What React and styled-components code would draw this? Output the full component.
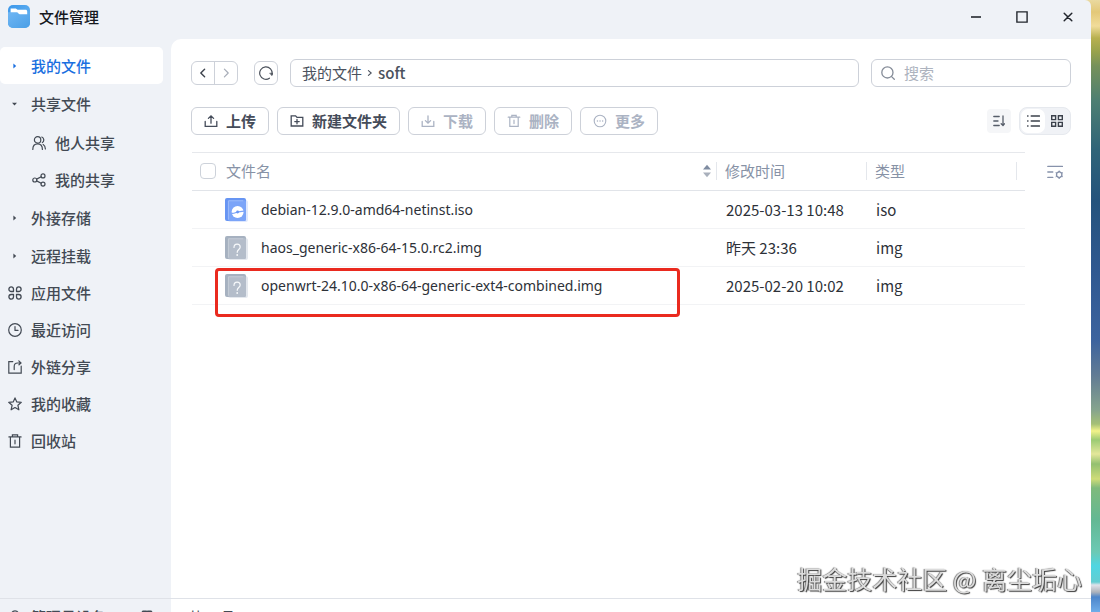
import { useState } from "react";
import styled, { createGlobalStyle, css } from "styled-components";

const GlobalStyle = createGlobalStyle`
  * {
    box-sizing: border-box;
  }
  body {
    margin: 0;
    overflow: hidden;
    font-family: "Noto Sans CJK SC", "Open Sans", sans-serif;
    font-size: 15px;
    line-height: 20px;
    color: #2b2f36;
  }
  button, input {
    font: inherit;
    color: inherit;
  }
  button {
    padding: 0;
    border: 0;
    background: none;
    cursor: pointer;
  }
  a {
    color: inherit;
    text-decoration: none;
  }
  ul {
    list-style: none;
    margin: 0;
    padding: 0;
  }
  svg {
    display: block;
    flex: none;
  }
`;

// desktop + window
const Desktop = styled.div`
  height: 100vh;
  padding-right: 9px;
  overflow: hidden;
  background: linear-gradient(
    180deg,
    #ead9a0 0,
    #e3c878 12px,
    #f1dc9a 26px,
    #b8b04f 38px,
    #98a24c 52px,
    #76915a 66px,
    #4e7f72 100px,
    #2f6478 150px,
    #24537c 200px,
    #2f5890 270px,
    #3c639e 340px,
    #627c94 376px,
    #86a48e 410px,
    #a5c076 424px,
    #f3f38a 431px,
    #9ccb74 440px,
    #e4e79a 454px,
    #93c070 464px,
    #cfdc78 479px,
    #7fba7c 488px,
    #63b894 520px,
    #6cc9b4 552px,
    #4fd6e2 566px,
    #63cdd2 582px,
    #dfe2ea 585px,
    #aeb3bb 592px,
    #4d86cb 597px,
    #6fade9 612px
  );
`;

// the window runs past the lower edge of the screen
const Window = styled.div`
  display: flex;
  flex-direction: column;
  height: calc(100vh + 22px);
  background: #eff2f7;
  border-radius: 0 6px 0 0;
  overflow: hidden;
`;

const TitleBar = styled.header`
  display: flex;
  align-items: center;
  flex: none;
  height: 39px;
  padding: 0 0 6px 8px;
  gap: 9px;
`;

const Title = styled.h1`
  flex: 1;
  margin: 0;
  font-size: 15px;
  font-weight: 500;
  color: #15181d;
`;

const WindowControls = styled.div`
  display: flex;
`;

const WindowButton = styled.button`
  display: flex;
  align-items: center;
  justify-content: center;
  width: 46px;
  height: 32px;
  color: #22262d;
`;

const Body = styled.div`
  display: flex;
  flex: 1;
  min-height: 0;
`;

// sidebar
const Sidebar = styled.aside`
  display: flex;
  flex-direction: column;
  flex: none;
  width: 171px;
`;

const SideNav = styled.nav`
  flex: 1;
  padding: 8px 8px 0 0;
`;

const Tree = styled.ul`
  display: flex;
  flex-direction: column;
  gap: 1px;
`;

const SubTree = styled.ul`
  padding-top: 2px;
`;

const NavItem = styled.a`
  display: flex;
  align-items: center;
  gap: 9px;
  height: 37px;
  padding-left: ${(p) => (p.$sub ? 32 : 8)}px;
  border-radius: 5px;
  font-weight: 500;
  color: #434a54;
  ${(p) =>
    p.$active &&
    css`
      background: #fff;
      color: #1a6fe0;
    `}
`;

const BottomBar = styled.footer`
  display: flex;
  align-items: center;
  flex: none;
  height: 36px;
  gap: 9px;
  padding: 0 ${(p) => p.$side}px;
  border-top: 1px solid #dfe2e8;
  font-weight: ${(p) => (p.$strong ? 500 : 400)};
  color: #434a54;
`;

const DeviceName = styled.span`
  flex: 1;
`;

// main panel
const Main = styled.main`
  display: flex;
  flex-direction: column;
  flex: 1;
  min-width: 0;
  background: #fff;
  border-top-left-radius: 10px;
`;

const Content = styled.div`
  flex: 1;
  padding: 20px 20px 0;
`;

const Row = styled.div`
  display: flex;
  align-items: center;
  height: 28px;
  gap: ${(p) => p.$gap}px;
  margin-bottom: ${(p) => p.$after}px;
`;

const outline = css`
  border: 1px solid #cdd1d9;
  border-radius: 6px;
`;

const History = styled.div`
  ${outline}
  display: flex;
  width: 47px;
  height: 24px;
  margin-right: 4px;
`;

const HistoryButton = styled.button`
  display: flex;
  align-items: center;
  justify-content: center;
  flex: 1;
  color: #3d434d;
  & + & {
    border-left: 1px solid #cdd1d9;
  }
  &:disabled {
    color: #a7adb8;
  }
`;

const RefreshButton = styled.button`
  ${outline}
  display: flex;
  align-items: center;
  justify-content: center;
  width: 24px;
  height: 24px;
  color: #4b515b;
`;

const PathBar = styled.nav`
  ${outline}
  display: flex;
  align-items: center;
  flex: 1;
  gap: 5px;
  height: 28px;
  padding: 0 11px;
  color: #4b525e;
`;

const Crumb = styled.a`
  font-weight: ${(p) => (p.$current ? 500 : 400)};
`;

const SearchBox = styled.label`
  ${outline}
  display: flex;
  align-items: center;
  gap: 9px;
  width: 200px;
  height: 28px;
  padding: 0 9px;
  color: #858c98;
`;

const SearchInput = styled.input`
  flex: 1;
  min-width: 0;
  padding: 0;
  border: 0;
  outline: 0;
  background: none;
  &::placeholder {
    color: #adb3be;
    opacity: 1;
  }
`;

const ToolButton = styled.button`
  ${outline}
  display: flex;
  align-items: center;
  gap: 8px;
  height: 28px;
  padding: 0 12px;
  font-weight: 700;
  color: #454c5a;
  white-space: nowrap;
  &:disabled {
    color: #abb3c3;
  }
`;

const Spacer = styled.div`
  flex: 1;
`;

const SortButton = styled.button`
  display: flex;
  align-items: center;
  justify-content: center;
  width: 24px;
  height: 24px;
  border-radius: 4px;
  background: #f5f6f8;
  color: #565d69;
`;

const ViewSwitch = styled.div`
  display: flex;
  height: 28px;
  padding: 1px;
  border: 1px solid #e6e9ee;
  border-radius: 8px;
  background: #f0f2f6;
`;

const ViewButton = styled.button`
  display: flex;
  align-items: center;
  justify-content: center;
  width: 24px;
  border-radius: 7px;
  background: ${(p) => (p.$on ? "#fff" : "transparent")};
  color: #3b414b;
`;

// file list
const ListArea = styled.div`
  display: flex;
  align-items: flex-start;
`;

const FileTable = styled.table`
  flex: 1;
  width: 100%;
  margin-left: 1px;
  border-collapse: separate;
  border-spacing: 0;
  table-layout: fixed;
`;

const HeadCell = styled.th`
  width: ${(p) => p.$width || "auto"};
  height: 39px;
  padding: 0 0 2px 8px;
  border-top: 1px solid #e6e8ec;
  border-bottom: 1px solid #e1e4e9;
  font-weight: 400;
  text-align: left;
  color: #8792a6;
`;

const HeadInner = styled.div`
  display: flex;
  align-items: center;
  gap: 10px;
  height: 18px;
  padding-right: 4px;
  border-right: 1px solid #e4e7ec;
`;

const HeadLabel = styled.span`
  flex: 1;
`;

const CheckBox = styled.input`
  appearance: none;
  width: 16px;
  height: 16px;
  margin: 0;
  border: 1px solid #cdd2da;
  border-radius: 4px;
  background: #fff;
`;

const Cell = styled.td`
  position: relative;
  height: 38px;
  padding: 0 0 0 9px;
  border-bottom: 1px solid #f2f3f5;
  color: #2d3138;
  white-space: nowrap;
`;

const FileName = styled.div`
  display: flex;
  align-items: center;
  gap: 12px;
  padding-left: 24px;
  font-family: "Noto Sans", "Noto Sans CJK SC", sans-serif;
  font-size: 14px;
`;

const Marker = styled.div`
  position: absolute;
  z-index: 1;
  inset: 1px 37px -13px 23px;
  border: 3px solid #ea2a1f;
  border-radius: 4px;
  pointer-events: none;
`;

const ColumnButton = styled.button`
  display: flex;
  align-items: center;
  justify-content: center;
  width: 46px;
  height: 40px;
  padding-left: 14px;
  color: #8792ab;
`;

const Watermark = styled.div`
  position: fixed;
  right: 18px;
  bottom: 15px;
  z-index: 2;
  font-size: 25px;
  line-height: 38px;
  color: #dcdcdc;
  text-shadow: 1px 1px 1px #3a3a3a, -1px 0 1px #777;
`;

function Icon({ size = 14, box = 14, width = 1.2, children }) {
  return (
    <svg
      width={size}
      height={size}
      viewBox={`0 0 ${box} ${box}`}
      fill="none"
      stroke="currentColor"
      strokeWidth={width}
      strokeLinecap="round"
      strokeLinejoin="round"
      aria-hidden="true"
    >
      {children}
    </svg>
  );
}

const CaretRight = () => (
  <Icon>
    <path d="M5.4 4.4 8.2 7 5.4 9.6Z" fill="currentColor" stroke="none" />
  </Icon>
);

const CaretDown = () => (
  <Icon>
    <path d="M4 5.8 9 5.8 6.5 8.6Z" fill="currentColor" stroke="none" />
  </Icon>
);

const UsersIcon = () => (
  <Icon>
    <circle cx="5.6" cy="3.9" r="3.2" />
    <path d="M.8 13.4c0-3.6 2-5.6 4.8-5.6s4.8 2 4.8 5.6M9.8 1a3.2 3.2 0 0 1 .6 5.6M11.2 8.6c1.4.8 2.1 2.4 2.2 4.4" />
  </Icon>
);

const ShareIcon = () => (
  <Icon>
    <circle cx="2.8" cy="7" r="2" />
    <circle cx="11" cy="2.9" r="2" />
    <circle cx="11" cy="11.1" r="2" />
    <path d="M4.6 6.1 9.2 3.8M4.6 7.9l4.6 2.3" />
  </Icon>
);

const AppsIcon = () => (
  <Icon width={1.3}>
    <path d="M5.5 5.5H3.2a2.3 2.3 0 1 1 2.3-2.3ZM8.5 5.5V3.2a2.3 2.3 0 1 1 2.3 2.3ZM5.5 8.5v2.3a2.3 2.3 0 1 1-2.3-2.3ZM8.5 8.5h2.3a2.3 2.3 0 1 1-2.3 2.3Z" />
  </Icon>
);

const ClockIcon = () => (
  <Icon>
    <circle cx="7" cy="7" r="6.3" />
    <path d="M7 3.6V7.4H10" />
  </Icon>
);

const LinkOutIcon = () => (
  <Icon>
    <path
      d="M4.8 1.6H.8v11.6h12.4V6.2M6.2 9.6V6.4c0-2.2 1.2-3.4 3.4-3.4h3.2M10.8.8 13 3l-2 1.8"
      strokeLinejoin="miter"
    />
  </Icon>
);

const StarIcon = () => (
  <Icon>
    <path d="m7 .9 1.8 4 4.5.4-3.4 3 1 4.5L7 10.5l-3.9 2.3 1-4.5-3.4-3 4.5-.4Z" />
  </Icon>
);

const TrashIcon = () => (
  <Icon>
    <path d="M.9 2.9h12.2M4.4 2.6V.9h5.2v1.7M2.4 3v10.1h9.2V3M7 6.2v3.6" strokeLinejoin="miter" />
  </Icon>
);

const UploadIcon = () => (
  <Icon width={1.3}>
    <path d="M1.2 7.4v5h11.6v-5M7 9.2V2M4.4 4.4 7 1.8l2.6 2.6" strokeLinejoin="miter" />
  </Icon>
);

const DownloadIcon = () => (
  <Icon width={1.3}>
    <path d="M1.2 7.4v5h11.6v-5M7 1.8V9M4.4 6.6 7 9.2l2.6-2.6" strokeLinejoin="miter" />
  </Icon>
);

const NewFolderIcon = () => (
  <Icon width={1.3}>
    <path d="M1.2 12V1.8h4.4l1.4 1.6h5.8V12ZM7 5.4v4.4M4.8 7.6h4.4" strokeLinejoin="miter" />
  </Icon>
);

const DeleteIcon = () => (
  <Icon>
    <path d="M1.2 3.2h11.6M4.8 3V1.4h4.4V3M2.8 3.4v9h8.4v-9M7 6.2v3.4" strokeLinejoin="miter" />
  </Icon>
);

const MoreIcon = () => (
  <Icon width={1.1}>
    <circle cx="7" cy="7" r="5.8" />
    <path d="M4.4 7h.1M7 7h.1M9.6 7h.1" strokeWidth="1.4" />
  </Icon>
);

const RefreshIcon = () => (
  <Icon>
    <path d="M13 8.2A6.2 6.2 0 1 0 10.4 12.2" />
    <path d="M11 7.2h3L13 9.4Z" fill="currentColor" strokeWidth=".6" />
  </Icon>
);

const SearchIcon = () => (
  <Icon width={1.3}>
    <circle cx="6.4" cy="6.4" r="5.6" />
    <path d="m10.6 10.6 2.7 2.7" />
  </Icon>
);

const SortIcon = () => (
  <Icon size={12} box={12} width={1.3}>
    <path d="M.8 1.5h5.4M.8 6h4.2M.8 10.5h5.4M10 1v9.4M8.2 8.8l1.8 1.8 1.4-1.8" />
  </Icon>
);

const ListIcon = () => (
  <Icon width={1.4}>
    <path d="M5.2 2h8.2M5.2 7h8.2M5.2 12h8.2M1.6 2h.4M1.6 7h.4M1.6 12h.4" />
  </Icon>
);

const GridIcon = () => (
  <Icon size={12} box={12} width={1.4}>
    <path d="M.7.7h3.9v3.9H.7ZM7.4.7h3.9v3.9H7.4ZM.7 7.4h3.9v3.9H.7ZM7.4 7.4h3.9v3.9H7.4Z" strokeLinejoin="miter" />
  </Icon>
);

const ColumnsIcon = () => (
  <Icon size={16} box={16} width={1.3}>
    <path d="M.8 2.4h14.6M.8 8h5M.8 13.4h5" />
    <path d="m12.2 7.6 2.6 1.6v3l-2.6 1.6-2.6-1.6v-3Z" strokeWidth="1.4" />
    <path d="M12.2 6.9v.6M12.2 13.9v.6M15.4 8.8l-.5.3M15.4 12.6l-.5-.3M9 8.8l.5.3M9 12.6l.5-.3" strokeWidth="1" />
  </Icon>
);

const SortArrows = () => (
  <svg width="10" height="14" viewBox="0 0 10 14" aria-hidden="true">
    <path d="M1 5.6 5 .8l4 4.8Z" fill="#7f8ca1" />
    <path d="M1 8.6h8l-4 4.6Z" fill="#a9b0bc" />
  </svg>
);

const AppLogo = () => (
  <svg width="22" height="23" viewBox="0 0 22 23" aria-hidden="true">
    <defs>
      <linearGradient id="logo" x1="0" y1="0" x2="1" y2="1">
        <stop offset="0" stopColor="#3b97ea" />
        <stop offset="1" stopColor="#6db8f3" />
      </linearGradient>
      <linearGradient id="front" x1="0" y1="0" x2="1" y2="1">
        <stop offset="0" stopColor="#6fb6f4" />
        <stop offset="1" stopColor="#4a9fe6" />
      </linearGradient>
    </defs>
    <rect width="22" height="23" rx="5" fill="url(#logo)" />
    <path d="M2.6 3.6h5.2l1.8 1.2h7.8c1.2 0 1.8.6 1.8 1.6v4H2.6Z" fill="#fff" />
    <path d="M0 7.2h8.6c1.6 0 1.8 2 3.4 2h10V18a5 5 0 0 1-5 5H5a5 5 0 0 1-5-5Z" fill="url(#front)" />
  </svg>
);

function FileIcon({ kind }) {
  const iso = kind === "iso";
  return (
    <svg width="24" height="26" viewBox="0 0 24 26" aria-hidden="true">
      <rect x="3" y="3" width="20" height="22" rx="2.5" fill={iso ? "#dfe8fd" : "#e4e8ee"} />
      <rect y="1" width="21" height="23" rx="2" fill={iso ? "#6795f3" : "#a6b1c0"} />
      <rect x="3" y="3.2" width="18" height="20.8" rx="1.4" fill={iso ? "#7ba4f8" : "#b4bdca"} />
      <path d="M3.4 22.6V3.8h14.8" fill="none" stroke={iso ? "#a5c1fb" : "#c9d0d9"} strokeWidth=".8" />
      {iso ? (
        <>
          <circle cx="12.6" cy="15" r="6" fill="#fff" />
          <path d="M6.2 16.2c3.4.6 3.8-.8 6.4-1.1s3-.9 6.4-1" fill="none" stroke="#7ba4f8" strokeWidth="1.2" />
          <circle cx="12.6" cy="15" r="1.4" fill="#6795f3" />
        </>
      ) : (
        <>
          <path
            d="M9 12.4c0-2 1.3-3.2 3.1-3.2s3.1 1.2 3.1 2.9c0 2.4-3 2.5-3 5.2"
            fill="none"
            stroke="#f7f9fb"
            strokeWidth="1.2"
            strokeLinecap="round"
          />
          <circle cx="12.2" cy="20" r=".9" fill="#f7f9fb" />
        </>
      )}
    </svg>
  );
}

const shortcuts = [
  { label: "应用文件", icon: AppsIcon },
  { label: "最近访问", icon: ClockIcon },
  { label: "外链分享", icon: LinkOutIcon },
  { label: "我的收藏", icon: StarIcon },
  { label: "回收站", icon: TrashIcon },
];

const actions = [
  { label: "上传", icon: UploadIcon },
  { label: "新建文件夹", icon: NewFolderIcon },
  { label: "下载", icon: DownloadIcon, disabled: true },
  { label: "删除", icon: DeleteIcon, disabled: true },
  { label: "更多", icon: MoreIcon, disabled: true },
];

const files = [
  { name: "debian-12.9.0-amd64-netinst.iso", time: "2025-03-13 10:48", type: "iso" },
  { name: "haos_generic-x86-64-15.0.rc2.img", time: "昨天 23:36", type: "img" },
  { name: "openwrt-24.10.0-x86-64-generic-ext4-combined.img", time: "2025-02-20 10:02", type: "img", marked: true },
];

function SideBar() {
  return (
    <Sidebar>
      <SideNav aria-label="位置">
        <Tree>
          <li>
            <NavItem href="#mine" $active><CaretRight />我的文件</NavItem>
          </li>
          <li>
            <NavItem href="#shared"><CaretDown />共享文件</NavItem>
            <SubTree>
              <li><NavItem href="#others" $sub><UsersIcon />他人共享</NavItem></li>
              <li><NavItem href="#my-shares" $sub><ShareIcon />我的共享</NavItem></li>
            </SubTree>
          </li>
          <li>
            <NavItem href="#external"><CaretRight />外接存储</NavItem>
          </li>
          <li>
            <NavItem href="#remote"><CaretRight />远程挂载</NavItem>
          </li>
        </Tree>
        <ul>
          {shortcuts.map(({ label, icon: Glyph }) => (
            <li key={label}>
              <NavItem href={`#${label}`}><Glyph />{label}</NavItem>
            </li>
          ))}
        </ul>
      </SideNav>
      <BottomBar $side={8} $strong>
        <Icon>
          <circle cx="7" cy="4" r="3.2" />
          <path d="M1.6 13.4c0-3.4 2.2-5 5.4-5s5.4 1.6 5.4 5" />
        </Icon>
        <DeviceName>管理员设备</DeviceName>
        <Icon size={32} box={32} width={1.6}>
          <path d="M12 10.2h3l1 .9 1-.9h3l4 6-4 6h-8l-4-6Z" />
          <circle cx="16" cy="16.2" r="2.2" />
        </Icon>
      </BottomBar>
    </Sidebar>
  );
}

export default function App() {
  const [query, setQuery] = useState("");
  const [view, setView] = useState("list");

  return (
    <>
      <GlobalStyle />
      <Desktop>
        <Window>
          <TitleBar>
            <AppLogo />
            <Title>文件管理</Title>
            <WindowControls>
              <WindowButton aria-label="最小化">
                <Icon size={12} box={12} width={1.6}><path d="M1 6h10" strokeLinecap="butt" /></Icon>
              </WindowButton>
              <WindowButton aria-label="最大化">
                <Icon size={12} box={12} width={1.4}><path d="M.9.9h10.2v10.2H.9Z" strokeLinejoin="miter" /></Icon>
              </WindowButton>
              <WindowButton aria-label="关闭">
                <Icon size={12} box={12} width={1.5}><path d="m2.2 2.2 7.6 7.6M9.8 2.2 2.2 9.8" /></Icon>
              </WindowButton>
            </WindowControls>
          </TitleBar>
          <Body>
            <SideBar />
            <Main>
              <Content>
                <Row $gap={12} $after={20}>
                  <History>
                    <HistoryButton aria-label="后退">
                      <Icon size={10} box={10} width={1.4}><path d="M6.6 1.2 2.8 5l3.8 3.8" /></Icon>
                    </HistoryButton>
                    <HistoryButton aria-label="前进" disabled>
                      <Icon size={10} box={10} width={1.2}><path d="M3.4 1.2 7.2 5 3.4 8.8" /></Icon>
                    </HistoryButton>
                  </History>
                  <RefreshButton aria-label="刷新"><RefreshIcon /></RefreshButton>
                  <PathBar aria-label="路径">
                    <Crumb href="#mine">我的文件</Crumb>
                    <Icon size={6} box={6} width={1.1}><path d="M1.4.6 4.2 3 1.4 5.4" /></Icon>
                    <Crumb href="#soft" $current>soft</Crumb>
                  </PathBar>
                  <SearchBox>
                    <SearchIcon />
                    <SearchInput
                      aria-label="搜索"
                      placeholder="搜索"
                      value={query}
                      onChange={(e) => setQuery(e.target.value)}
                    />
                  </SearchBox>
                </Row>
                <Row $gap={8} $after={17}>
                  {actions.map(({ label, icon: Glyph, disabled }) => (
                    <ToolButton key={label} disabled={disabled}><Glyph />{label}</ToolButton>
                  ))}
                  <Spacer />
                  <SortButton aria-label="排序"><SortIcon /></SortButton>
                  <ViewSwitch>
                    <ViewButton aria-label="列表" $on={view === "list"} onClick={() => setView("list")}>
                      <ListIcon />
                    </ViewButton>
                    <ViewButton aria-label="网格" $on={view === "grid"} onClick={() => setView("grid")}>
                      <GridIcon />
                    </ViewButton>
                  </ViewSwitch>
                </Row>
                <ListArea>
                  <FileTable>
                    <thead>
                      <tr>
                        <HeadCell>
                          <HeadInner>
                            <CheckBox type="checkbox" aria-label="全选" />
                            <HeadLabel>文件名</HeadLabel>
                            <SortArrows />
                          </HeadInner>
                        </HeadCell>
                        <HeadCell $width="150px"><HeadInner>修改时间</HeadInner></HeadCell>
                        <HeadCell $width="150px"><HeadInner>类型</HeadInner></HeadCell>
                        <HeadCell $width="8px" aria-hidden="true" />
                      </tr>
                    </thead>
                    <tbody>
                      {files.map((file) => (
                        <tr key={file.name}>
                          <Cell>
                            <FileName><FileIcon kind={file.type} />{file.name}</FileName>
                            {file.marked && <Marker />}
                          </Cell>
                          <Cell>{file.time}</Cell>
                          <Cell>{file.type}</Cell>
                          <Cell />
                        </tr>
                      ))}
                    </tbody>
                  </FileTable>
                  <ColumnButton aria-label="列设置"><ColumnsIcon /></ColumnButton>
                </ListArea>
              </Content>
              <BottomBar $side={17}>共 3 项</BottomBar>
            </Main>
          </Body>
        </Window>
        <Watermark>掘金技术社区 @ 离尘垢心</Watermark>
      </Desktop>
    </>
  );
}
